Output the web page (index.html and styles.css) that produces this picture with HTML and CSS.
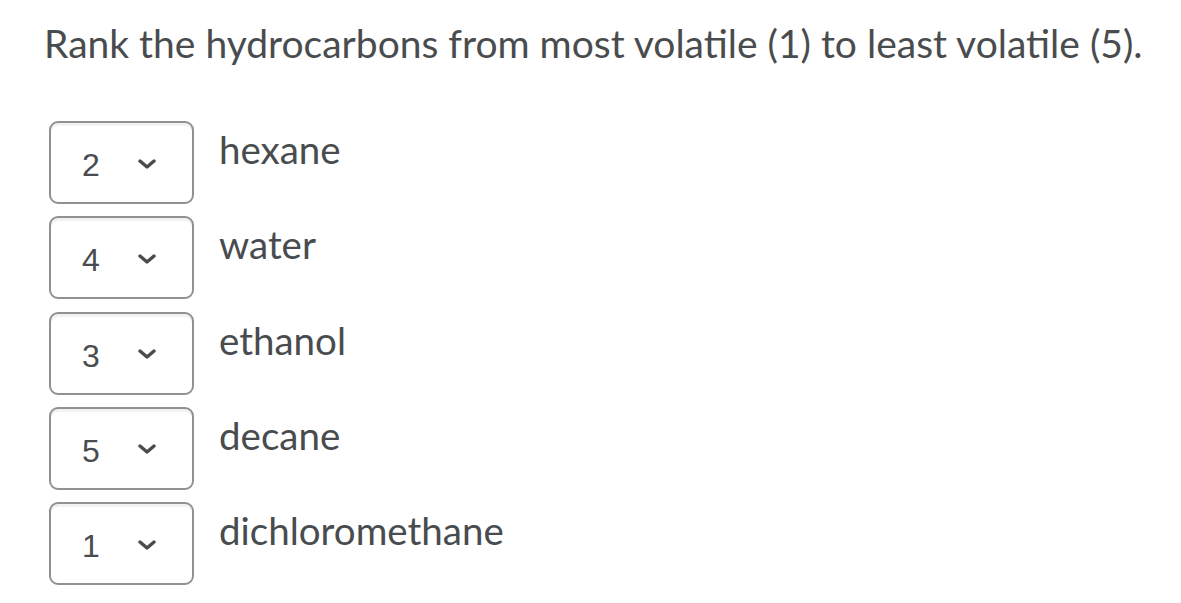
FILE: index.html
```html
<!DOCTYPE html>
<html lang="en">
<head>
<meta charset="utf-8">
<title>Rank the hydrocarbons</title>
<link rel="stylesheet" href="styles.css">
</head>
<body>
<main class="question">
  <h1 class="prompt">Rank the hydrocarbons from most volatile (1) to least volatile (5).</h1>
  <ul class="rows">
    <li class="row">
      <div class="select"><span class="value">2</span><svg class="chev" viewBox="0 0 18 10" width="18" height="10"><path d="M2 2 L9 8 L16 2" /></svg></div>
      <span class="label">hexane</span>
    </li>
    <li class="row">
      <div class="select"><span class="value">4</span><svg class="chev" viewBox="0 0 18 10" width="18" height="10"><path d="M2 2 L9 8 L16 2" /></svg></div>
      <span class="label">water</span>
    </li>
    <li class="row">
      <div class="select"><span class="value">3</span><svg class="chev" viewBox="0 0 18 10" width="18" height="10"><path d="M2 2 L9 8 L16 2" /></svg></div>
      <span class="label">ethanol</span>
    </li>
    <li class="row">
      <div class="select"><span class="value">5</span><svg class="chev" viewBox="0 0 18 10" width="18" height="10"><path d="M2 2 L9 8 L16 2" /></svg></div>
      <span class="label">decane</span>
    </li>
    <li class="row">
      <div class="select"><span class="value">1</span><svg class="chev" viewBox="0 0 18 10" width="18" height="10"><path d="M2 2 L9 8 L16 2" /></svg></div>
      <span class="label">dichloromethane</span>
    </li>
  </ul>
</main>
</body>
</html>
```

FILE: styles.css
```css
html, body {
  margin: 0;
  padding: 0;
  background: #ffffff;
}

body {
  font-family: Lato, "Noto Sans", sans-serif;
  color: #494c4e;
}

.question {
  padding: 20px 0 0 44px;
}

.prompt {
  margin: 0;
  font-size: 39px;
  font-weight: 400;
  line-height: normal;
  color: #494c4e;
}

.rows {
  list-style: none;
  margin: 55px 0 0 5px;
  padding: 0;
  display: flex;
  flex-direction: column;
  gap: 12.25px;
}

.row {
  display: flex;
  align-items: flex-start;
  gap: 25px;
}

.select {
  box-sizing: border-box;
  width: 145px;
  height: 83px;
  border: 2px solid #8f9193;
  border-radius: 9px;
  box-shadow: inset 0 3px 0 #f1f2f3;
  display: flex;
  align-items: center;
  padding: 5px 0 0 31px;
  gap: 38px;
}

.value {
  font-family: "Liberation Sans", Arial, sans-serif;
  font-size: 32px;
  line-height: 1;
  color: #494c4e;
}

.chev {
  display: block;
  margin-top: -3px;
}

.chev path {
  fill: none;
  stroke: #494c4e;
  stroke-width: 3.4;
  stroke-linecap: round;
  stroke-linejoin: round;
}

.label {
  font-size: 38.5px;
  line-height: normal;
  padding-top: 5px;
  color: #494c4e;
}
```
